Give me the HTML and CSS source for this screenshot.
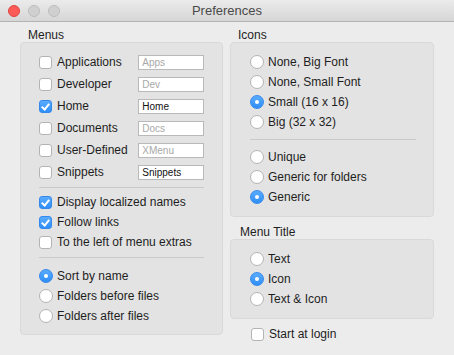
FILE: index.html
```html
<!DOCTYPE html>
<html lang="en">
<head>
  <meta charset="UTF-8">
  <title>Preferences</title>
  <link rel="stylesheet" href="styles.css">
</head>
<body>
  <div class="window">
    <div class="titlebar">
      <div class="lights">
        <span class="light red"></span>
        <span class="light"></span>
        <span class="light"></span>
      </div>
      <div class="title">Preferences</div>
    </div>

    <div class="content">
      <div class="column">
        <div class="group-label">Menus</div>
        <div class="box menus-box">
          <div class="field-row"><span class="check"></span><span class="label">Applications</span><span class="field placeholder">Apps</span></div>
          <div class="field-row"><span class="check"></span><span class="label">Developer</span><span class="field placeholder">Dev</span></div>
          <div class="field-row"><span class="check on"></span><span class="label">Home</span><span class="field">Home</span></div>
          <div class="field-row"><span class="check"></span><span class="label">Documents</span><span class="field placeholder">Docs</span></div>
          <div class="field-row"><span class="check"></span><span class="label">User-Defined</span><span class="field placeholder">XMenu</span></div>
          <div class="field-row"><span class="check"></span><span class="label">Snippets</span><span class="field">Snippets</span></div>

          <div class="sep sep-a"></div>

          <div class="row"><span class="check on"></span><span class="label">Display localized names</span></div>
          <div class="row"><span class="check on"></span><span class="label">Follow links</span></div>
          <div class="row"><span class="check"></span><span class="label">To the left of menu extras</span></div>

          <div class="sep sep-b"></div>

          <div class="row"><span class="radio on"></span><span class="label">Sort by name</span></div>
          <div class="row"><span class="radio"></span><span class="label">Folders before files</span></div>
          <div class="row"><span class="radio"></span><span class="label">Folders after files</span></div>
        </div>
      </div>

      <div class="column">
        <div class="group-label">Icons</div>
        <div class="box icons-box">
          <div class="row"><span class="radio"></span><span class="label">None, Big Font</span></div>
          <div class="row"><span class="radio"></span><span class="label">None, Small Font</span></div>
          <div class="row"><span class="radio on"></span><span class="label">Small (16 x 16)</span></div>
          <div class="row"><span class="radio"></span><span class="label">Big (32 x 32)</span></div>

          <div class="sep sep-c"></div>

          <div class="row"><span class="radio"></span><span class="label">Unique</span></div>
          <div class="row"><span class="radio"></span><span class="label">Generic for folders</span></div>
          <div class="row"><span class="radio on"></span><span class="label">Generic</span></div>
        </div>

        <div class="group-label second">Menu Title</div>
        <div class="box title-box">
          <div class="row"><span class="radio"></span><span class="label">Text</span></div>
          <div class="row"><span class="radio on"></span><span class="label">Icon</span></div>
          <div class="row"><span class="radio"></span><span class="label">Text &amp; Icon</span></div>
        </div>

        <div class="row login"><span class="check"></span><span class="label">Start at login</span></div>
      </div>
    </div>
  </div>
</body>
</html>
```

FILE: styles.css
```css
body {
  margin: 0;
  padding: 0;
  font-family: "Liberation Sans", Arial, sans-serif;
  font-size: 12px;
  color: #1e1e1e;
}

.window {
  width: 454px;
  height: 355px;
  background: #ececec;
  overflow: hidden;
}

/* Title bar */
.titlebar {
  height: 21px;
  position: relative;
  background: linear-gradient(#ebebeb, #d6d6d6);
  border-bottom: 1px solid #b3b3b3;
}

.lights {
  display: flex;
  gap: 8px;
  padding: 5px 0 0 8px;
}

.light {
  width: 12px;
  height: 12px;
  box-sizing: border-box;
  border-radius: 50%;
  background: #d0d0d0;
  border: 1px solid #bdbdbd;
}

.light.red {
  background: #fc5b57;
  border-color: #e0443f;
}

.title {
  position: absolute;
  left: 0;
  right: 0;
  top: 3px;
  text-align: center;
  font-size: 13px;
  color: #4a4a4a;
}

/* Content */
.content {
  display: flex;
  gap: 7px;
  padding: 0 20px;
}

.column {
  width: 203px;
  display: flex;
  flex-direction: column;
}

.column + .column {
  width: 204px;
}

.group-label {
  height: 14px;
  line-height: 14px;
  margin-top: 6px;
  padding-left: 8px;
}

.group-label.second {
  margin-top: 8px;
  padding-left: 10px;
}

.box {
  background: #e3e3e3;
  border: 1px solid #d9d9d9;
  border-radius: 4px;
  box-sizing: border-box;
}

.menus-box {
  height: 293px;
  padding: 8px 18px 0 18px;
}

.icons-box {
  height: 175px;
  padding: 9px 17px 0 19px;
}

.title-box {
  height: 80px;
  padding: 9px 17px 0 19px;
}

.row,
.field-row {
  display: flex;
  align-items: center;
  height: 20px;
}

.field-row {
  height: 22px;
}

.field-row .label {
  width: 83px;
}

.label {
  margin-left: 5px;
  white-space: nowrap;
}

.field {
  width: 67px;
  height: 15px;
  box-sizing: border-box;
  background: #fff;
  border: 1px solid #b9b9b9;
  font-size: 10px;
  line-height: 13px;
  padding-left: 3px;
  color: #111;
}

.field.placeholder {
  color: #a8a8a8;
}

.sep {
  height: 1px;
  background: #cacaca;
  margin-right: 0;
}

.sep-a {
  margin: 4px 0 4px;
}

.sep-b {
  margin: 5px 0 8px;
}

.sep-c {
  margin: 7px 0 7px;
}

.icons-box .sep {
  margin-right: 0;
  width: 166px;
}

/* Checkboxes and radios */
.check {
  width: 13px;
  height: 13px;
  box-sizing: border-box;
  flex: none;
  border-radius: 3px;
  background: #fff;
  border: 1px solid #b4b4b4;
  position: relative;
}

.check.on {
  background: linear-gradient(#5aacfd, #2f8ef8);
  border-color: #3589ec;
}

.check.on::after {
  content: "";
  position: absolute;
  left: 3px;
  top: 1px;
  width: 3px;
  height: 6px;
  border-right: 2px solid #fff;
  border-bottom: 2px solid #fff;
  transform: rotate(40deg);
}

.radio {
  width: 14px;
  height: 14px;
  box-sizing: border-box;
  flex: none;
  border-radius: 50%;
  background: #fff;
  border: 1px solid #b4b4b4;
  position: relative;
}

.radio + .label {
  margin-left: 4px;
}

.radio.on {
  background: linear-gradient(#5aacfd, #2f8ef8);
  border-color: #3589ec;
}

.radio.on::after {
  content: "";
  position: absolute;
  left: 4px;
  top: 4px;
  width: 4px;
  height: 4px;
  border-radius: 50%;
  background: #fff;
}

.login {
  margin-top: 5px;
  padding-left: 21px;
}
```
